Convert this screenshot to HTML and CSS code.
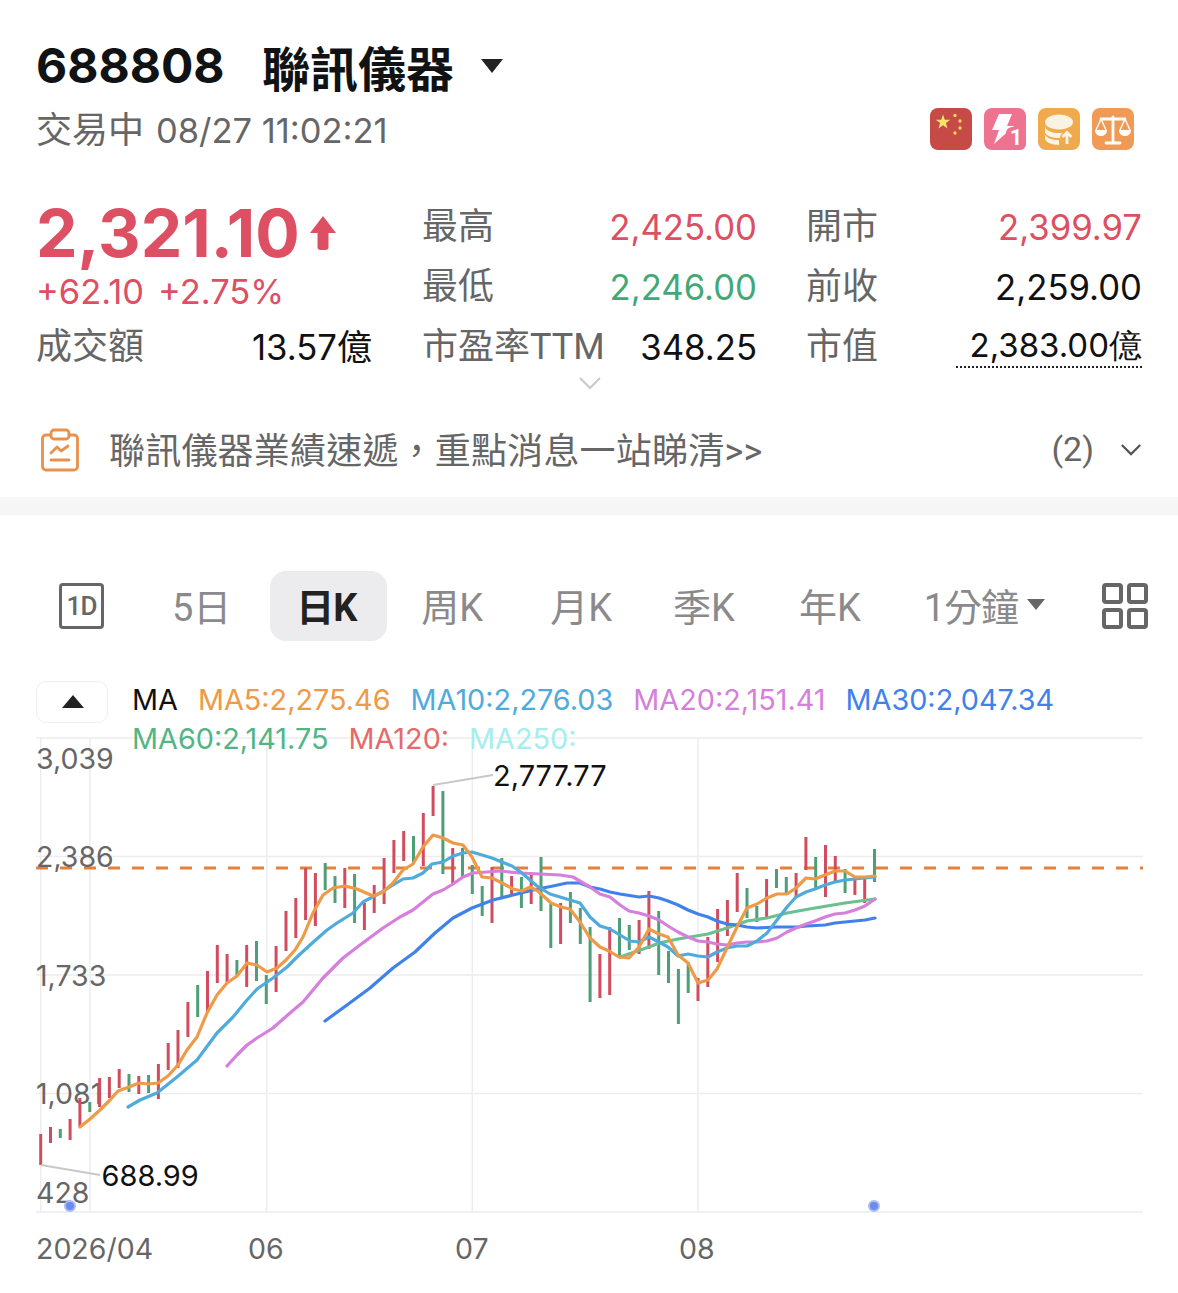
FILE: index.html
```html
<!DOCTYPE html>
<html lang="zh-Hant">
<head>
<meta charset="utf-8">
<title>688808 聯訊儀器</title>
<link rel="stylesheet" href="styles.css">
</head>
<body>
<main class="page">
  <header class="head">
    <h1 class="title"><span class="code">688808</span><span class="name">聯訊儀器</span><span class="caret"></span></h1>
    <div class="sub">
      <span class="status">交易中 <span class="num">08/27 11:02:21</span></span>
      <div class="badges">
        <svg class="badge" viewBox="0 0 42 42"><rect width="42" height="42" rx="8" fill="#c64a45"/><path d="M13 6.500l1.800 5.200 5.500.1-4.400 3.300 1.600 5.300-4.500-3.200-4.500 3.200 1.600-5.300-4.400-3.300 5.500-.1z" fill="#fbe36c"/><g fill="#f4d264"><circle cx="25" cy="7.500" r="1.700"/><circle cx="30" cy="13" r="1.700"/><circle cx="30" cy="20" r="1.700"/><circle cx="25" cy="25" r="1.700"/></g></svg>
        <svg class="badge" viewBox="0 0 42 42"><rect width="42" height="42" rx="8" fill="#ee7390"/><path d="M15 6h13l-5 12h7L10 36l5-14H8z" fill="#fff"/><rect x="22" y="19" width="20" height="23" rx="6" fill="#ee7390"/><text class="badge-num" x="32" y="37">1</text></svg>
        <svg class="badge" viewBox="0 0 42 42"><rect width="42" height="42" rx="8" fill="#efaa4c"/><ellipse cx="21" cy="14" rx="14" ry="7.500" fill="#fbf3e2"/><path d="M7 19c2 4 7 6 14 6 2 0 3 0 4-.5-2 1.500-3 3.500-3 5.500-8 0-13-2-15-5zM7 27c2 3 7 5 14 5v5c-8 0-14-3-14-7z" fill="#fbf3e2"/><path d="M29 36V25M24.500 29l4.500-4.500 4.500 4.500" fill="none" stroke="#fbf3e2" stroke-width="2.800"/></svg>
        <svg class="badge" viewBox="0 0 42 42"><rect width="42" height="42" rx="8" fill="#f09a55"/><path d="M21 9v25M9 11h24M14 35h14" fill="none" stroke="#fff" stroke-width="2.800" stroke-linecap="round"/><path d="M9 11l-5 11M9 11l5 11M33 11l-5 11M33 11l5 11" fill="none" stroke="#fff" stroke-width="1.400"/><path d="M3 22h12c0 4-3 6-6 6s-6-2-6-6zM27 22h12c0 4-3 6-6 6s-6-2-6-6z" fill="#fff"/></svg>
      </div>
    </div>
  </header>

  <section class="quote">
    <div class="price-col">
      <div class="price"><span>2,321.10</span><svg class="arrow" viewBox="0 0 28 36"><path d="M14 1l13 17h-7.500v14a3 3 0 0 1-3 3h-5a3 3 0 0 1-3-3V18H1z" fill="#dd4f63"/></svg></div>
      <div class="change"><span>+62.10</span><span>+2.75%</span></div>
      <div class="turnover"><span class="label">成交額</span><span class="value">13.57<span class="unit">億</span></span></div>
    </div>
    <dl class="stats">
      <dt class="label">最高</dt><dd class="value up">2,425.00</dd>
      <dt class="label">開市</dt><dd class="value up">2,399.97</dd>
      <dt class="label">最低</dt><dd class="value down">2,246.00</dd>
      <dt class="label">前收</dt><dd class="value">2,259.00</dd>
      <dt class="label">市盈率TTM</dt><dd class="value">348.25</dd>
      <dt class="label">市值</dt><dd class="value cap"><span>2,383.00億</span></dd>
    </dl>
  </section>
  <div class="expand"><svg class="expand-icon" viewBox="0 0 24 14"><path d="M2 2l10 10L22 2" fill="none" stroke="#c9c9cc" stroke-width="2"/></svg></div>

  <section class="news">
    <svg class="news-icon" viewBox="0 0 38 44"><g fill="none" stroke="#e8914b" stroke-width="2.800" stroke-linejoin="round" stroke-linecap="round"><path d="M10 7H5a3.500 3.500 0 0 0-3.500 3.500v28A3.500 3.500 0 0 0 5 42h28a3.500 3.500 0 0 0 3.500-3.500v-28A3.500 3.500 0 0 0 33 7h-5"/><rect x="10" y="2" width="18" height="9" rx="3"/><path d="M10 32h18M10 25l6-6 4 4 7-5"/></g></svg>
    <span class="news-text">聯訊儀器業績速遞，重點消息一站睇清&gt;&gt;</span>
    <span class="news-count">(2)</span>
    <svg class="news-chev" viewBox="0 0 24 14"><path d="M2 2l10 10L22 2" fill="none" stroke="#555" stroke-width="2.400"/></svg>
  </section>

  <div class="band"></div>

  <nav class="tabs">
    <span class="tab-1d">1D</span>
    <span class="tab t5">5日</span>
    <span class="tab active">日K</span>
    <span class="tab tw">周K</span>
    <span class="tab tm">月K</span>
    <span class="tab tq">季K</span>
    <span class="tab ty">年K</span>
    <span class="tab tmin">1分鐘<i class="caret small"></i></span>
    <span class="layout"><i></i><i></i><i></i><i></i></span>
  </nav>

  <section class="chart">
    <svg class="plot" viewBox="0 660 1178 633">
      <g class="grid">
        <path d="M36 738H1143M36 856.500H1143M36 975H1143M36 1093.500H1143M36 1212H1143M40.700 738V1212M90 738V1212M266.700 738V1212M472.300 738V1212M698 738V1212"/>
      </g>
      <path class="dash" d="M36 868H1143"/>
      <g class="ticks">
        <text x="36" y="769">3,039</text>
        <text x="36" y="867">2,386</text>
        <text x="36" y="985.500">1,733</text>
        <text x="36" y="1104">1,081</text>
        <text x="36" y="1203">428</text>
        <text x="36" y="1259">2026/04</text>
        <text x="248" y="1259">06</text>
        <text x="455" y="1259">07</text>
        <text x="679" y="1259">08</text>
      </g>
      <path class="candle red" d="M40.700 1134V1165M50.500 1127V1143M70.100 1119V1140M79.900 1098V1127M99.600 1078V1107M109.400 1077V1098M119.200 1069V1088M138.800 1076V1094M158.400 1064V1099M168.200 1043V1070M178 1030V1068M187.900 1002V1037M207.500 971V1012M217.300 945V983M227.100 954V982M246.700 945V987M276.100 946V992M286 911V951M295.800 898V938M305.600 868V920M315.400 873V926M344.800 868V908M364.400 903V930M374.200 885V913M384.100 858V904M393.900 840V873M403.700 831V861M423.300 813V866M433.100 786V816M452.700 848V883M492 867V923M511.600 876V894M531.200 875V904M560.600 903V944M599.900 954V998M609.700 927V995M639.100 920V954M648.900 891V949M698 978V1001M707.800 937V987M717.600 909V962M727.400 900V936M737.200 873V912M766.600 879V917M796.100 873V898M805.900 837V870M825.500 845V897M835.300 856V881M854.900 877V895M864.700 878V903"/>
      <path class="candle green" d="M60.300 1129V1138M89.800 1102V1112M129 1074V1092M148.600 1075V1093M197.700 985V1017M236.900 960V975M256.500 941V981M266.300 975V1004M325.200 863V890M335 876V903M354.600 874V923M413.500 836V864M442.900 791V874M462.500 848V877M472.300 865V894M482.200 886V916M501.800 858V897M521.400 877V908M541 857V911M550.800 904V948M570.400 892V923M580.300 908V944M590.100 927V1002M619.500 918V957M629.300 925V950M658.700 911V975M668.500 951V983M678.400 969V1024M688.200 962V993M747 888V918M756.800 906V922M776.500 869V888M786.300 877V894M815.700 857V888M845.100 869V893M874.500 849V882"/>
      <polyline class="ma ma60" points="620,957 649,947 659,943 678,939 708,934 727,928 747,921 767,918 787,913 815,908 845,903 875,899"/>
      <polyline class="ma ma30" points="325,1021 347,1005 370,988 393,968 415,952 435,933 453,918 472,908 493,900 513,895 533,890 553,886 567,883 580,883 590,887 600,889 610,892 620,894 639,897 649,896 659,898 668,901 678,905 688,910 698,914 708,917 717,921 727,924 737,925 747,927 757,928 777,927 797,927 807,926 825,925 835,923 845,922 855,921 865,920 875,918"/>
      <polyline class="ma ma20" points="227,1066 237,1055 247,1045 257,1038 273,1028 290,1013 303,1002 323,978 343,958 360,945 383,928 400,917 413,910 423,902 433,894 443,890 453,884 463,877 473,873 487,872 500,871 520,873 540,874 560,875 573,877 590,887 600,894 610,897 620,905 629,911 639,913 649,916 659,920 668,926 678,932 688,937 698,941 708,942 717,944 727,945 737,943 747,942 757,942 767,941 777,938 787,932 796,928 806,924 815,921 825,917 835,914 845,913 855,910 865,906 875,899"/>
      <polyline class="ma ma10" points="128,1107 140,1100 157,1093 177,1077 197,1060 217,1033 233,1017 247,1000 257,989 273,978 287,967 297,957 310,945 327,930 337,923 353,913 363,902 380,893 393,885 403,879 413,878 423,873 432,864 443,862 453,856 463,853 472,852 492,858 512,866 522,873 537,886 550,894 570,900 580,903 590,917 600,926 610,929 620,935 630,941 639,942 649,937 659,942 668,947 678,956 688,954 698,956 708,957 717,952 727,948 737,946 747,946 757,941 767,933 777,920 787,907 796,897 806,892 815,889 825,885 835,882 845,880 855,879 865,878 875,877"/>
      <polyline class="ma ma5" points="80,1127 90,1119 100,1110 110,1100 118,1091 129,1087 139,1083 148,1084 158,1083 168,1076 178,1065 187,1050 197,1037 207,1013 217,995 227,983 237,976 247,963 257,965 267,972 277,968 286,960 295,950 303,937 313,913 323,895 333,888 345,886 357,889 373,896 383,892 393,883 403,870 413,864 423,847 433,835 443,838 453,843 463,845 472,857 482,877 492,878 502,883 513,889 522,891 530,887 538,891 551,903 561,907 570,909 580,922 590,938 600,947 609,951 619,957 629,958 639,947 649,929 659,934 668,937 678,955 688,963 698,983 708,980 717,969 727,948 737,927 747,908 757,904 767,898 777,894 787,894 796,888 806,878 815,879 825,875 835,871 845,871 855,877 865,877 875,876"/>
      <path class="leader" d="M433 785L493 775M41 1165L100 1175"/>
      <text class="callout" x="493" y="786">2,777.77</text>
      <text class="callout" x="101.500" y="1186">688.99</text>
      <g class="dots"><circle cx="70" cy="1206" r="5"/><circle cx="874" cy="1206" r="5"/></g>
    </svg>
    <div class="legend">
      <button class="collapse" type="button" aria-label="收起"></button>
      <div class="legend-items">
        <span class="l-ma">MA</span>
        <span class="l5">MA5:2,275.46</span>
        <span class="l10">MA10:2,276.03</span>
        <span class="l20">MA20:2,151.41</span>
        <span class="l30">MA30:2,047.34</span>
        <span class="l60">MA60:2,141.75</span>
        <span class="l120">MA120:</span>
        <span class="l250">MA250:</span>
      </div>
    </div>
  </section>
</main>
</body>
</html>
```
FILE: styles.css
```css
* { box-sizing: border-box; }
html, body { margin: 0; padding: 0; background: #fff; }
body { font-family: Roboto, "Noto Sans CJK TC", sans-serif; color: #111; }
.page { width: 1178px; height: 1293px; overflow: hidden; }

.head { padding: 36px 44px 0 36px; }
.title { margin: 0; display: flex; align-items: center; height: 60px; font-size: 48px; font-weight: 700; line-height: 60px; color: #111214; }
.code { font-family: Inter, sans-serif; width: 226px; }
.name { width: 219px; font-family: "Noto Sans CJK TC", sans-serif; font-weight: 700; }
.caret { display: block; width: 0; height: 0; border-left: 11px solid transparent; border-right: 11px solid transparent; border-top: 14px solid #222; }
.sub { display: flex; justify-content: space-between; align-items: center; height: 48px; margin-top: 9px; }
.status { font-size: 36px; color: #666; padding-bottom: 4px; }
.num { margin-left: 3px; font-family: Inter, sans-serif; font-size: 34.500px; }
.badges { display: flex; gap: 12px; }
.badge { width: 42px; height: 42px; display: block; overflow: visible; }
.badge-num { font: 700 22px Roboto, sans-serif; fill: #fff; text-anchor: middle; }

.quote { display: flex; padding: 44px 36px 0 36px; }
.price-col { width: 386px; }
.price { display: flex; align-items: center; height: 62px; margin-top: 5px; font-family: Inter, sans-serif; font-size: 66px; font-weight: 700; line-height: 62px; color: #dd4f63; }
.arrow { width: 28px; height: 36px; margin-left: 9px; }
.change { display: flex; gap: 14px; height: 47px; margin-top: 6px; font-family: Inter, sans-serif; font-size: 34.500px; line-height: 44px; color: #dd4f63; }
.turnover { display: flex; justify-content: space-between; width: 336px; height: 60px; line-height: 60px; }
.label { color: #666; font-size: 36px; }
.value { color: #111; font-family: Inter, sans-serif; font-size: 34.700px; text-align: right; margin: 0; }
.unit { font-family: "Noto Sans CJK TC", sans-serif; font-size: 35px; line-height: 1; }
.up { color: #dd4f63; }
.down { color: #43a877; }
.stats { flex: 1; margin: 0; display: grid; grid-template-columns: 181px 154px 49px 1fr 1fr; grid-auto-rows: 60px; line-height: 60px; align-items: center; }
.stats dt, .stats dd { white-space: nowrap; }
.stats dd:nth-of-type(odd) { grid-column: 2; }
.stats dt:nth-of-type(even) { grid-column: 4; }
.stats dd:nth-of-type(even) { grid-column: 5; }
.cap { justify-self: end; font-size: 33px; }
.cap span { display: inline-block; padding-left: 14px; line-height: 42px; border-bottom: 2px dotted #222; transform: translateY(-2px); }

.expand { display: flex; justify-content: center; height: 26px; margin-top: -1px; }
.expand-icon { width: 24px; height: 14px; display: block; transform: translateX(1px); }
.news { display: flex; align-items: center; height: 95px; padding: 0 36px 0 41px; }
.news-icon { width: 38px; height: 44px; }
.news-text { margin-left: 30px; flex: 1; padding-bottom: 3px; font-size: 36px; letter-spacing: 0.2px; color: #666; }
.news-count { font-size: 34px; color: #666; padding-bottom: 2px; }
.news-chev { width: 22px; height: 13px; margin-left: 26px; }
.band { height: 18px; background: #f6f6f7; }

.tabs { display: flex; align-items: center; height: 70px; margin-top: 56px; padding-left: 59px; font-size: 38px; color: #8a8a8d; }
.tab { display: flex; align-items: center; justify-content: center; height: 70px; padding-bottom: 4px; white-space: nowrap; }
.tab-1d { display: flex; align-items: center; justify-content: center; width: 45px; height: 46px; border: 3px solid #666; border-radius: 4px; font-size: 26px; font-weight: 500; color: #666; letter-spacing: -1px; }
.t5 { margin-left: 68px; }
.active { margin-left: 39px; width: 117px; background: #ececee; border-radius: 16px; color: #222; font-weight: 700; letter-spacing: -1px; padding-right: 5px; }
.tw { margin-left: 34px; }
.tm { margin-left: 67px; }
.tq { margin-left: 61px; }
.ty { margin-left: 64px; }
.tmin { margin-left: 63px; letter-spacing: -1px; }
.caret.small { margin-left: 9px; border-left-width: 9px; border-right-width: 9px; border-top-width: 11px; border-top-color: #666; }
.layout { display: grid; grid-template-columns: 21px 21px; grid-auto-rows: 21px; gap: 4px; margin-left: 57px; }
.layout i { display: block; border: 4px solid #666; border-radius: 4px; }

.chart { position: relative; height: 633px; margin-top: 19px; }
.plot { position: absolute; left: 0; top: 0; width: 1178px; height: 633px; display: block; }
.grid path { fill: none; stroke: #ededee; stroke-width: 1.500; }
.dash { fill: none; stroke: #e57f3a; stroke-width: 3; stroke-dasharray: 12 12; }
.ticks text { font-family: Inter, sans-serif; font-size: 28.500px; fill: #666; }
.candle { fill: none; stroke-width: 3; }
.red { stroke: #d14c5f; }
.green { stroke: #4e9e77; }
.ma { fill: none; stroke-width: 3.200; stroke-linejoin: round; stroke-linecap: round; }
.ma5 { stroke: #ee9a47; }
.ma10 { stroke: #4fabdb; }
.ma20 { stroke: #d67fdc; }
.ma30 { stroke: #3f82ea; }
.ma60 { stroke: #6cc08f; }
.leader { fill: none; stroke: #c8c8c8; stroke-width: 2; }
.callout { font-family: Inter, sans-serif; font-size: 29px; fill: #111; }
.dots circle { fill: #6d8bef; stroke: #a9bcf5; stroke-width: 2; }

.legend { position: relative; display: flex; align-items: flex-start; padding: 20px 36px 0 36px; font-family: Inter, sans-serif; font-size: 28.800px; line-height: 39px; }
.collapse { position: relative; flex: none; width: 72px; height: 42px; margin-top: 1px; padding: 0; background: #fff; border: 1.500px solid #eee; border-radius: 10px; }
.collapse::after { content: ""; position: absolute; left: 25px; top: 13px; border-left: 11px solid transparent; border-right: 11px solid transparent; border-bottom: 13px solid #222; }
.legend-items { display: flex; flex-wrap: wrap; column-gap: 20px; margin-left: 24px; width: 1012px; }
.legend-items span { white-space: nowrap; }
.l-ma { color: #111; }
.l5 { color: #ee9a47; }
.l10 { color: #4fabdb; }
.l20 { color: #d67fdc; }
.l30 { color: #3f82ea; }
.l60 { color: #52b585; }
.l120 { color: #e56a6a; }
.l250 { color: #a5eeee; }
```
